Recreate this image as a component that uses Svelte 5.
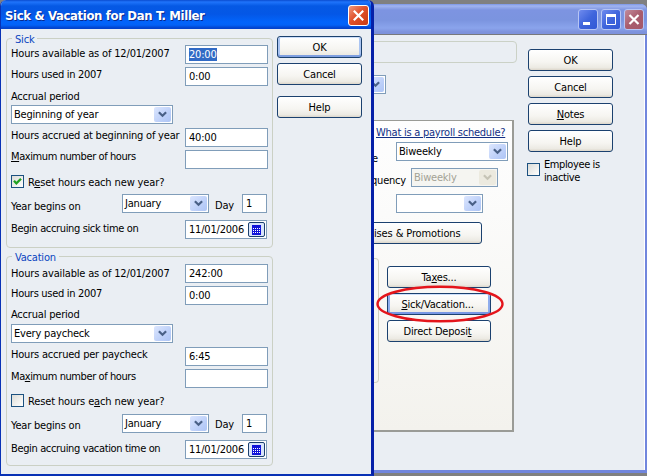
<script>
  const groups = [
    {
      title: 'Sick', cls: 'sick', available: '20:00', selected: true, used: '0:00',
      period: 'Beginning of year', accruedLabel: 'Hours accrued at beginning of year',
      accrued: '40:00', max: ['', 'M', 'aximum number of hours'], checked: true,
      reset: ['R', 'e', 'set hours each new year?'], begin: 'Begin accruing sick time on'
    },
    {
      title: 'Vacation', cls: 'vacation', available: '242:00', selected: false, used: '0:00',
      period: 'Every paycheck', accruedLabel: 'Hours accrued per paycheck',
      accrued: '6:45', max: ['Ma', 'x', 'imum number of hours'], checked: false,
      reset: ['Reset hours e', 'a', 'ch new year?'], begin: 'Begin accruing vacation time on'
    }
  ];
</script>

{#snippet key(p)}<span>{p[0]}<u>{p[1]}</u>{p[2]}</span>{/snippet}

{#snippet select(text, cls)}
  <div class="select {cls}">
    <span>{text}</span>
    <i><svg width="9" height="7" viewBox="0 0 9 7"><path d="M.9 1.2 4.5 4.8 8.1 1.2" fill="none" stroke="currentColor" stroke-width="2.2" /></svg></i>
  </div>
{/snippet}

{#snippet check(on)}
  <div class="check">
    {#if on}<svg width="11" height="11" viewBox="0 0 11 11"><path d="M2 4.7 4.4 7.4 9 2.8" fill="none" stroke="#21a121" stroke-width="2.3" /></svg>{/if}
  </div>
{/snippet}

<div class="desktop">
  <div class="main">
    <div class="bar">
      <b class="min"><svg width="19" height="20"><path d="M4 13.5h7" stroke="#fff" stroke-width="3" /></svg></b>
      <b><svg width="19" height="20"><path d="M4.5 4.5v10h9v-10" fill="none" stroke="#fff" /><path d="M4 5.5h10" stroke="#fff" stroke-width="3" /></svg></b>
      <b class="shut"><svg width="19" height="20"><path d="M4.5 5l9 9M13.500 5l-9 9" stroke="#fff" stroke-width="2.2" /></svg></b>
    </div>
    <div class="content">
      <div class="left">
        <div class="topbox"></div>
        {@render select('', 'tab')}
        <div class="panel">
          <div class="link"><u>What is a payroll schedule?</u></div>
          <div class="line l1"><span class="down">Pay schedule</span>{@render select('Biweekly', 'wide')}</div>
          <div class="line l2"><span>Pay frequency</span>{@render select('Biweekly', 'disabled')}</div>
          <div class="line l3">{@render select('', 'month')}</div>
          <div class="btn raises">Raises &amp; Promotions</div>
          <div class="lower">
            <div class="items"></div>
            <div class="actions">
              <div class="btn">{@render key(['Ta', 'x', 'es...'])}</div>
              <div class="btn hot">{@render key(['', 'S', 'ick/Vacation...'])}</div>
              <div class="btn deposit">{@render key(['Direct Deposi', 't', ''])}</div>
              <svg class="ring" width="130" height="40"><ellipse cx="65" cy="20" rx="62.5" ry="17.3" fill="none" stroke="#e4151b" stroke-width="2.4" /></svg>
            </div>
          </div>
        </div>
      </div>
      <div class="side">
        <div class="btn">OK</div>
        <div class="btn">Cancel</div>
        <div class="btn">{@render key(['', 'N', 'otes'])}</div>
        <div class="btn">Help</div>
        <div class="inactive">{@render check(false)}<span>Employee is<br />inactive</span></div>
      </div>
    </div>
  </div>

  <div class="dialog">
    <div class="title">
      <strong>Sick &amp; Vacation for Dan T. Miller</strong>
      <div class="close"><svg width="19" height="19"><path d="M4.8 4.8l9.4 9.4M14.2 4.8l-9.4 9.4" stroke="#fff" stroke-width="2.2" /></svg></div>
    </div>
    <div class="body">
      <div class="groups">
        {#each groups as g}
          <div class="group {g.cls}">
            <div class="legend"><span>{g.title}</span></div>
            <div class="row first"><label>Hours available as of 12/01/2007</label><div class="input"><span class:sel={g.selected}>{g.available}</span></div></div>
            <div class="row used"><label>Hours used in 2007</label><div class="input">{g.used}</div></div>
            <div class="row period"><label>Accrual period</label></div>
            <div class="row pick">{@render select(g.period, 'long')}</div>
            <div class="row"><label>{g.accruedLabel}</label><div class="input">{g.accrued}</div></div>
            <div class="row max"><label>{@render key(g.max)}</label><div class="input"></div></div>
            <div class="row reset">{@render check(g.checked)}<label>{@render key(g.reset)}</label></div>
            <div class="row year"><label>Year begins on</label>{@render select('January', 'month')}<span class="dayname">Day</span><div class="input day">1</div></div>
            <div class="row date"><label>{g.begin}</label>
              <div class="input cal">11/01/2006
                <i><svg width="11" height="10" viewBox="0 0 11 10"><path d="M1 0h9v10H1z" fill="#1013d8" /><path d="M2 3.500h7M2 5.500h7M2 7.500h7" stroke="#fff" stroke-dasharray="1 1" /></svg></i>
              </div>
            </div>
          </div>
        {/each}
      </div>
      <div class="buttons">
        <div class="btn default">OK</div>
        <div class="btn">Cancel</div>
        <div class="btn help">Help</div>
      </div>
    </div>
  </div>
</div>

<style>
  :global(body) { margin: 0; }
  .desktop, .desktop * { box-sizing: border-box; }
  .desktop {
    position: relative; width: 647px; height: 476px; overflow: hidden; background: #808080;
    font: 11px/14px "DejaVu Sans Condensed", "DejaVu Sans", sans-serif; letter-spacing: -0.2px;
    color: #000; white-space: nowrap;
  }
  u { text-underline-offset: 1px; text-decoration-thickness: 1px; }
  svg { display: block; }
  i { font-style: normal; }

  .main {
    position: absolute; left: 300px; top: 4px; width: 347px; height: 469px;
    background: #eaeef3; border: solid #7186dd; border-width: 0 2px 3px 0; border-radius: 0 6px 0 0;
    display: flex; flex-direction: column;
  }
  .bar {
    height: 31px; flex: none; display: flex; justify-content: flex-end; gap: 3px; padding: 5px 3px 0 0;
    background: linear-gradient(#7b96e6 0, #a1b4f0 2px, #7d94e1 6px, #7b94df 16px, #8aa4ec 24px, #7d92dc 28px);
    border-bottom: 1px solid #77787c; margin-right: -2px; border-radius: 0 6px 0 0;
  }
  .bar b {
    width: 20px; height: 21px; border: 1px solid #b6c5f5; border-radius: 3px;
    background: linear-gradient(135deg, #6f8bee, #3f65dc 50%, #3158d6);
  }
  .bar .shut { background: linear-gradient(135deg, #c28b9b, #a95d6e 50%, #a4586a); }
  .content { flex: 1; display: flex; border-right: 1px solid #fff; }
  .left { width: 228px; padding-top: 6px; }
  .topbox { width: 217px; height: 22px; border: 1px solid #cbd1c6; border-radius: 4px; }
  .panel {
    width: 214px; height: 312px; margin-top: 26px; padding: 5px 0 0;
    border: solid #9a9b96; border-width: 1px 2px 2px 0;
    background: linear-gradient(#fefefe, #fbfbfa 30%, #f3f2ed);
  }
  .link { height: 14px; color: #112f85; padding-left: 76px; letter-spacing: -.24px; }
  .line { display: flex; height: 26px; justify-content: flex-end; }
  .l1 { padding-right: 4px; margin-top: 2px; }
  .l1 > span { padding-top: 10px; margin-right: 18px; }
  .l2 { padding-right: 14px; }
  .l2 > span { padding-top: 6px; margin-right: 5px; }
  .l3 { padding-right: 29px; }
  .raises { width: 142px; margin: 2px 0 0 40px; letter-spacing: -.12px; }
  .lower { display: flex; justify-content: space-between; margin-top: 14px; padding-right: 21px; }
  .items { width: 79px; height: 125px; border: 1px solid #d0d0bf; border-left: 0; border-radius: 0 4px 4px 0; }
  .actions { position: relative; width: 104px; padding-top: 8px; display: flex; flex-direction: column; gap: 5px; }
  .ring { position: absolute; left: -12px; top: 26px; }
  .side { padding-top: 14px; display: flex; flex-direction: column; gap: 5px; }
  .side .btn { width: 85px; }
  .inactive { display: flex; gap: 4px; line-height: 13px; margin: 1px 0 0 -1px; letter-spacing: -.4px; }
  .inactive .check { margin-top: 5px; }

  .btn {
    height: 22px; border: 1px solid #1b416f; border-radius: 3px; flex: none;
    background: linear-gradient(#fff, #f6f5f1 60%, #eceae3 88%, #dcd6ca);
    display: flex; justify-content: center; align-items: center; padding-top: 1px;
  }
  .default { box-shadow: inset 0 1px #cee0fb, inset 0 -2px #7f9fe0, inset 2px 0 #abc5f2, inset -2px 0 #abc5f2; }
  .hot { padding-right: 3px; box-shadow: inset 0 1px #cee0fb, inset 0 -2px #7797e4, inset 2px 0 #8fadec, inset -2px 0 #8fadec; }
  .deposit { padding-right: 3px; }
  .select {
    height: 19px; border: 1px solid #809db9; background: #fff; flex: none;
    display: flex; justify-content: space-between; padding: 1px 1px 1px 2px;
  }
  .select > span { padding-top: 1px; }
  .select i {
    width: 17px; height: 15px; border-radius: 2px; color: #4a6187; flex: none;
    background: linear-gradient(135deg, #dce6fe, #b9cdf8 70%, #aec5f5);
    display: flex; justify-content: center; align-items: center;
  }
  .long { width: 162px; }
  .month { width: 87px; }
  .wide { width: 112px; }
  .tab { width: 86px; margin-top: 12px; }
  .disabled { width: 87px; background: #f5f5f1; color: #a3a295; }
  .disabled i { background: #eceadf; color: #c6c4b6; }
  .check {
    width: 13px; height: 13px; flex: none; border: 1px solid #1c5180;
    background: linear-gradient(135deg, #dcdcd7, #fff);
  }

  .dialog {
    position: absolute; left: 0; top: 0; width: 374px; height: 476px; background: #eaeef3;
    border: solid #0831b5; border-width: 0 3px 2px 1px; border-right-color: #0520a8;
    border-radius: 6px 6px 0 0; display: flex; flex-direction: column; overflow: hidden;
  }
  .title {
    height: 29px; flex: none; margin: 0 -3px 0 -1px; padding: 5px 5px 0 5px;
    background: linear-gradient(#0a4ccf 0, #1f74fb 2px, #0559e4 6px, #0457e6 14px, #0264fb 22px, #0362f7 25px, #0343cd 28px);
    display: flex; justify-content: space-between;
  }
  .title strong {
    font: bold 13px/22px "DejaVu Sans Condensed", sans-serif; letter-spacing: -.36px;
    color: #fff; text-shadow: 1px 1px #0a2a8c;
  }
  .close {
    width: 21px; height: 21px; border: 1px solid #fff; border-radius: 3px;
    background: linear-gradient(135deg, #f0997f, #e0512b 45%, #c93a12);
  }
  .body { flex: 1; display: flex; padding: 7px 9px 0 5px; justify-content: space-between; border-left: 1px solid #2d68d8; margin-left: -1px; }
  .groups { padding-top: 2px; }
  .group { width: 267px; border: 1px solid #cbd0c4; border-radius: 4px; padding: 0 4px; }
  .sick { height: 210px; }
  .vacation { height: 210px; margin-top: 8px; }
  .legend { height: 6px; color: #0a45c0; display: flex; }
  .vacation .legend { height: 7px; }
  .legend span { height: 14px; margin-top: -6px; padding: 0 3px; margin-left: 1px; background: #eaeef3; }
  .row { display: flex; height: 22px; justify-content: space-between; align-items: flex-start; }
  .row label { padding-top: 1px; }
  .first label { padding-top: 2px; letter-spacing: -.17px; }
  .vacation .first label { padding-top: 3px; }
  .used label { letter-spacing: -.3px; }
  .period { height: 16px; }
  .vacation .period { margin-top: -1px; height: 17px; }
  .pick { height: 23px; }
  .max { height: 25px; }
  .max label { letter-spacing: -.41px; }
  .sick .max label { padding-top: 0; }
  .reset { height: 19px; justify-content: flex-start; gap: 4px; }
  .reset label { letter-spacing: -.13px; }
  .vacation .reset { height: 20px; }
  .year { height: 26px; justify-content: flex-start; }
  .year label { width: 111px; padding-top: 6px; }
  .vacation .year label { padding-top: 5px; }
  .dayname { width: 33px; padding: 5px 0 0 6px; }
  .vacation .dayname { padding-top: 4px; }
  .date label { padding-top: 2px; letter-spacing: -.36px; }
  .input { width: 83px; height: 19px; border: 1px solid #809db9; background: #fff; padding: 2px 3px; flex: none; }
  .input .sel { background: #316ac5; color: #fff; display: inline-block; height: 13px; line-height: 14px; }
  .day { width: 25px; }
  .cal { width: 82px; margin-right: 1px; padding: 2px 1px 0 3px; display: flex; justify-content: space-between; }
  .cal i {
    width: 17px; height: 15px; margin-top: -1px; border: 1px solid #1b416f; border-radius: 2px;
    background: #d9e5fa; display: flex; align-items: center; justify-content: center;
  }
  .buttons { width: 85px; display: flex; flex-direction: column; gap: 5px; }
  .help { margin-top: 6px; }
</style>
